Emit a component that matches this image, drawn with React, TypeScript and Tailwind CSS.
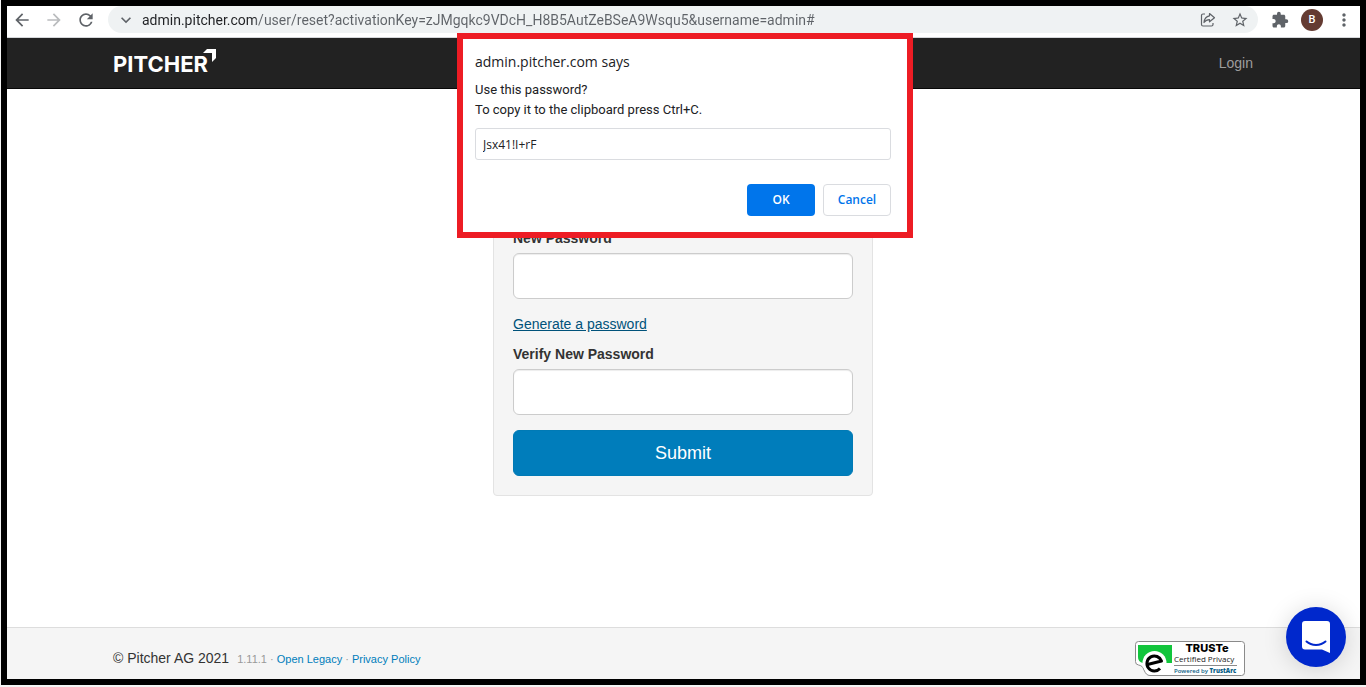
import { MdArrowBack, MdArrowForward, MdExpandMore, MdExtension, MdMoreVert, MdRefresh, MdStarBorder } from "react-icons/md";

const ShareIcon = () => (
  <svg viewBox="0 0 20 20" className="size-5" fill="none" stroke="currentColor" strokeWidth="1.2" strokeLinejoin="round">
    <path d="M7 4H5A1.500 1.500 0 0 0 3.500 5.500v9A1.500 1.500 0 0 0 5 16h8.500a1.500 1.500 0 0 0 1.500-1.500V13" />
    <path d="M11.500 3.500 16.500 7.700l-5 4.100V9.600C9 9.600 7.500 10.400 6 12.500 6.300 9 8.200 6.300 11.500 5.800Z" />
  </svg>
);

const BrowserBar = () => (
  <div className="flex items-start gap-3 border-b border-[#d5d7da] bg-white pb-1 pl-[5px] pr-[6px] text-[#5f6368]">
    <div className="flex h-[27px] items-center gap-3">
      <button type="button" aria-label="Back"><MdArrowBack className="size-5" /></button>
      <button type="button" aria-label="Forward" className="text-[#babcbe]"><MdArrowForward className="size-5" /></button>
      <button type="button" aria-label="Reload"><MdRefresh className="size-5" /></button>
    </div>
    <div className="flex h-[27px] min-w-0 flex-1 items-center gap-3 rounded-full bg-[#eff2f3] px-2">
      <div className="flex min-w-0 flex-1 items-center gap-[6px]">
        <MdExpandMore className="size-5 shrink-0" />
        {/* the host name is darker than the rest of the address */}
        <input
          aria-label="Address"
          className="min-w-0 flex-1 bg-[linear-gradient(to_right,#202124_114px,#5f6368_114px)] bg-clip-text font-[Roboto,sans-serif] text-[14px] leading-5 text-transparent outline-none"
          defaultValue="admin.pitcher.com/user/reset?activationKey=zJMgqkc9VDcH_H8B5AutZeBSeA9Wsqu5&username=admin#"
        />
      </div>
      <button type="button" aria-label="Share"><ShareIcon /></button>
      <button type="button" aria-label="Bookmark" className="px-px"><MdStarBorder className="size-[18px]" /></button>
    </div>
    <div className="flex h-[27px] items-center gap-[11px]">
      <button type="button" aria-label="Extensions" className="px-px"><MdExtension className="size-[18px]" /></button>
      <button type="button" className="size-[22px] rounded-full bg-[#643b32] font-[Roboto,sans-serif] text-[11px] font-medium text-white">B</button>
      <button type="button" aria-label="Menu"><MdMoreVert className="size-5" /></button>
    </div>
  </div>
);

const Logo = () => (
  <a href="#" className="flex items-start text-white">
    <span className="pt-[5px] font-['Inter',sans-serif] text-[22px] font-bold leading-5">PITCHER</span>
    <svg viewBox="0 0 13 13" className="-ml-[5px] size-[13px]" fill="currentColor">
      <path d="M4 0h9v9l-4 4V4H0Z" />
    </svg>
  </a>
);

const TrustBadge = () => (
  <a href="#" aria-label="TRUSTe Certified Privacy">
    <svg viewBox="0 0 110 35" className="h-[35px] w-[110px]">
      <path d="M3.500.5h103a3 3 0 0 1 3 3v28a3 3 0 0 1-3 3H15c-3 0-4.500-2-6-5.500C8 25.500 6 24.500 3.500 24A3.500 3.500 0 0 1 .5 20.500v-17a3 3 0 0 1 3-3Z" fill="#fff" stroke="#8a8a8a" />
      <path d="M3 4h34v18h-4L8 22Q3 21 3 16Z" fill="#12c53c" />
      <circle cx="19.500" cy="22" r="12" fill="#fff" />
      <path d="M12.500 23.500 26.500 20A7.500 7.500 0 1 0 25 27.500" fill="none" stroke="#000" strokeWidth="3" strokeLinejoin="round" />
      <path d="M39 24.500h63" stroke="#8a8a8a" />
      <g fontFamily="'Open Sans', sans-serif">
        <text x="72" y="11" textAnchor="middle" fontFamily="Inter, sans-serif" fontSize="11" fontWeight="800">TRUSTe</text>
        <text x="39" y="21" fontSize="8" fill="#222">Certified Privacy</text>
        <text x="39" y="32" fontSize="6" fontWeight="600" fill="#075d84">Powered by <tspan fontWeight="800">TrustArc</tspan></text>
      </g>
    </svg>
  </a>
);

const PasswordField = ({ id, label }: { id: string; label: string }) => (
  <div>
    <label htmlFor={id} className="mb-[5px] block font-bold">{label}</label>
    <input
      id={id}
      type="password"
      className="block h-[46px] w-full rounded-md border border-[#ccc] bg-white px-4 shadow-[inset_0_1px_1px_rgba(0,0,0,0.075)] outline-none"
    />
  </div>
);

const PasswordPrompt = () => (
  <div className="absolute inset-x-0 top-[27px] flex justify-center pl-[3px]">
    <div role="dialog" aria-labelledby="prompt-title" className="w-[456px] border-[6px] border-[#ed1c24] bg-white pb-4 pl-3 pr-4 pt-[13px] font-['Open_Sans',sans-serif] text-[12px] leading-5 text-[#202124]">
      <h2 id="prompt-title" className="mb-2 text-[14px] leading-5">admin.pitcher.com says</h2>
      <label htmlFor="prompt-value" className="block font-[Roboto,sans-serif] text-[13px] leading-5">
        Use this password?<br />
        To copy it to the clipboard press Ctrl+C.
      </label>
      <input id="prompt-value" defaultValue="Jsx41!I+rF" className="mt-2 block h-8 w-full rounded-[3px] border border-[#dadce0] px-[7px] outline-none" />
      <div className="mt-6 flex justify-end gap-2 font-semibold">
        <button type="button" className="h-8 w-[68px] rounded bg-[#0075eb] text-white">OK</button>
        <button type="button" className="h-8 w-[68px] rounded border border-[#dadce0] text-[#0075eb]">Cancel</button>
      </div>
    </div>
  </div>
);

const App = () => (
  <div className="flex min-h-screen bg-[#f4f4f4] pb-[2px] pl-px font-['Liberation_Sans',Arial,sans-serif] text-[14px] leading-5 text-[#333]">
    <div className="relative flex min-w-0 flex-1 flex-col border-[6px] border-black bg-white">
      <BrowserBar />

      <header className="border-b border-[#080808] bg-[#222] pr-px">
        <nav className="mx-auto flex h-[50px] max-w-[1140px] items-start justify-between">
          <div className="pt-[11px]"><Logo /></div>
          <a href="#" className="pt-[15px] text-[#9d9d9d]">Login</a>
        </nav>
      </header>

      <main className="flex-1 pr-px pt-[119px]">
        <form className="mx-auto max-w-[380px] rounded border border-[#e3e3e3] bg-[#f5f5f5] p-[19px]">
          <PasswordField id="new-password" label="New Password" />
          <a href="#" className="mb-[10px] mt-[15px] block w-fit text-[#00527a] underline">Generate a password</a>
          <PasswordField id="verify-password" label="Verify New Password" />
          <button type="submit" className="mt-[15px] block h-[46px] w-full rounded-md border border-[#007ab5] bg-[#007dbb] text-[18px] text-white">Submit</button>
        </form>
      </main>

      <footer className="border-t border-[#ddd] bg-[#f5f5f5] pr-px">
        <div className="mx-auto flex h-[51px] max-w-[1140px] items-start justify-between">
          <p className="pt-5">
            © Pitcher AG 2021
            <small className="ml-2 text-[11px] text-[#999]">
              1.11.1 · <a href="#" className="text-[#007dbb]">Open Legacy</a> · <a href="#" className="text-[#007dbb]">Privacy Policy</a>
            </small>
          </p>
          <div className="pr-2 pt-[13px]"><TrustBadge /></div>
        </div>
      </footer>

      <PasswordPrompt />
    </div>

    <button type="button" aria-label="Open chat" className="fixed bottom-5 right-5 flex size-[60px] items-center justify-center rounded-full bg-[#0028cc] shadow-[0_2px_24px_rgba(0,0,0,0.15)]">
      <svg viewBox="0 0 28 32" className="h-8 w-7">
        <path d="M3 0h22a3 3 0 0 1 3 3v29l-8-3.500H3a3 3 0 0 1-3-3V3a3 3 0 0 1 3-3Z" fill="#fff" />
        <path d="M4.500 20.500c5 4.500 14 4.500 19 0" fill="none" stroke="#0028cc" strokeWidth="2" strokeLinecap="round" />
      </svg>
    </button>
  </div>
);

export default App;
